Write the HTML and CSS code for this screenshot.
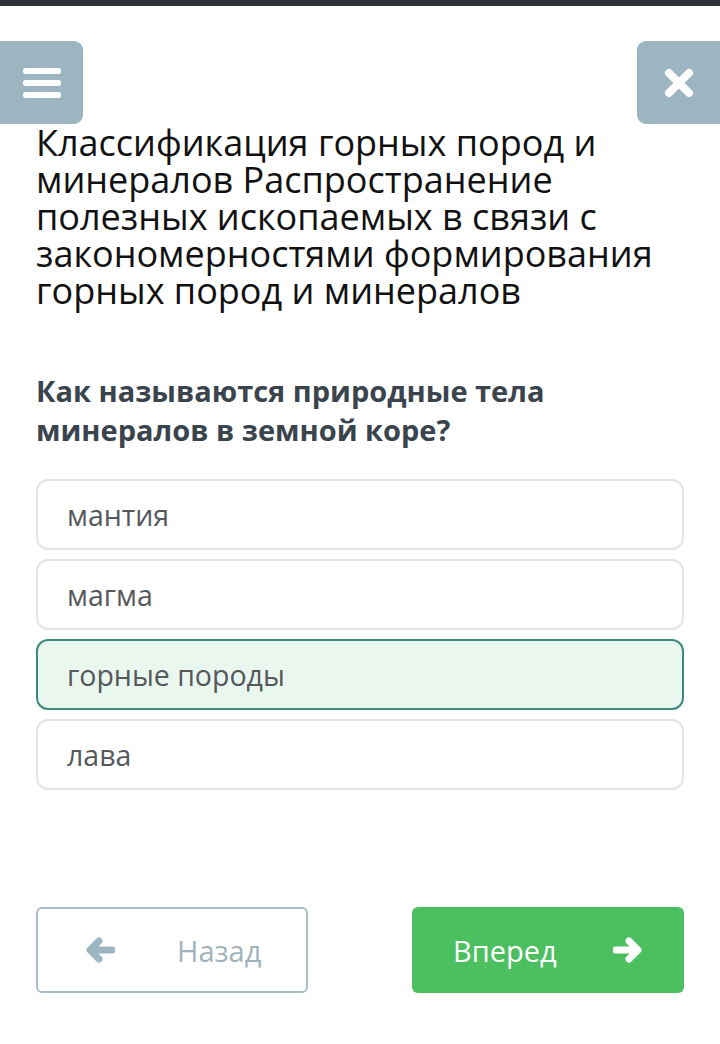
FILE: index.html
```html
<!DOCTYPE html>
<html lang="ru">
<head>
<meta charset="utf-8">
<link rel="stylesheet" href="styles.css">
</head>
<body>
<div class="topbar"></div>
<header class="header">
  <button class="icon-btn menu" aria-label="menu">
    <svg width="38" height="32" viewBox="0 0 38 32"><rect x="0" y="1" width="38" height="6" rx="2.5" fill="#fff"/><rect x="0" y="13" width="38" height="6" rx="2.5" fill="#fff"/><rect x="0" y="25" width="38" height="6" rx="2.5" fill="#fff"/></svg>
  </button>
  <button class="icon-btn close" aria-label="close">
    <svg width="30" height="30" viewBox="0 0 30 30"><path d="M5 5 L25 25 M25 5 L5 25" stroke="#fff" stroke-width="8" stroke-linecap="round"/></svg>
  </button>
</header>
<main class="content">
  <h1 class="title">Классификация горных пород и минералов Распространение полезных ископаемых в связи с закономерностями формирования горных пород и минералов</h1>
  <h2 class="question">Как называются природные тела минералов в земной коре?</h2>
  <div class="options">
    <div class="option">мантия</div>
    <div class="option">магма</div>
    <div class="option selected">горные породы</div>
    <div class="option">лава</div>
  </div>
  <div class="nav">
    <button class="nav-btn back">
      <svg width="30" height="26" viewBox="0 0 30 26"><path d="M27 13 H7 M14 4 L5 13 L14 22" stroke="#9db5c1" stroke-width="7" stroke-linecap="round" stroke-linejoin="round" fill="none"/></svg>
      <span>Назад</span>
    </button>
    <button class="nav-btn next">
      <span>Вперед</span>
      <svg width="30" height="26" viewBox="0 0 30 26"><path d="M3 13 H23 M16 4 L25 13 L16 22" stroke="#fff" stroke-width="7" stroke-linecap="round" stroke-linejoin="round" fill="none"/></svg>
    </button>
  </div>
</main>
</body>
</html>
```

FILE: styles.css
```css
* { box-sizing: border-box; }
html, body { margin: 0; padding: 0; background: #fff; }
body { font-family: "Open Sans", "Noto Sans", sans-serif; width: 720px; }
.topbar { height: 6px; background: #2b3139; }
.header { display: flex; justify-content: space-between; margin-top: 35px; }
.icon-btn {
  width: 83px; height: 83px; border: 0; padding: 0;
  background: #9db5c1; display: flex; align-items: center; justify-content: center;
}
.menu { border-radius: 0 9px 9px 0; }
.close { border-radius: 9px 0 0 9px; }
.content { padding: 0 36px; }
.title {
  margin: 0; font-weight: 400; font-size: 36px; line-height: 37px; color: #111;
}
.question {
  margin: 62px 0 0; font-weight: 700; font-size: 29px; line-height: 39px; color: #3a444c;
  padding-right: 80px;
}
.options { display: flex; flex-direction: column; gap: 9px; margin-top: 30px; }
.option {
  height: 71px; flex: none; border: 2px solid #e3e5e6; border-radius: 12px;
  display: flex; align-items: center; padding-left: 29px;
  font-size: 28.5px; color: #55595c;
}
.option.selected { background: #eaf7ee; border-color: #3d8b7e; }
.nav { display: flex; justify-content: space-between; margin-top: 117px; }
.nav-btn {
  width: 272px; height: 86px; border-radius: 6px; font-family: inherit;
  font-size: 29px; display: flex; align-items: center; padding: 0;
}
.back { background: #fff; border: 2px solid #a9bdc7; color: #9fb3bd; padding-left: 47px; gap: 62px; }
.next { background: #4cbf60; border: 0; color: #fff; padding-left: 41px; gap: 56px; }
```
